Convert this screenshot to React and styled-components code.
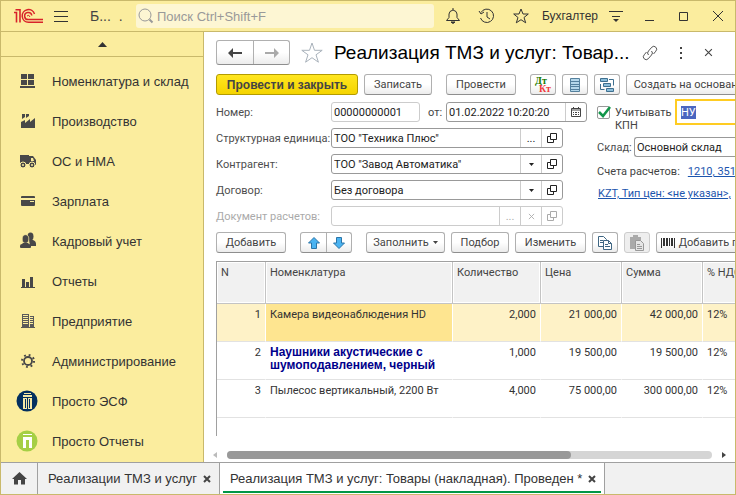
import React, { useEffect, useRef } from "react";
import styled, { createGlobalStyle, css } from "styled-components";

const menuItems = [
  { name: "Номенклатура и склад", icon: "stock" },
  { name: "Производство", icon: "factory" },
  { name: "ОС и НМА", icon: "truck" },
  { name: "Зарплата", icon: "card" },
  { name: "Кадровый учет", icon: "people" },
  { name: "Отчеты", icon: "chart" },
  { name: "Предприятие", icon: "building" },
  { name: "Администрирование", icon: "gear" },
  { name: "Просто ЭСФ", icon: "esf" },
  { name: "Просто Отчеты", icon: "reports" },
];

const rows = [
  { id: 1, name: "Камера видеонаблюдения HD", count: "2,000", price: "21 000,00", sum: "42 000,00", vat: "12%", selected: true },
  { id: 2, name: "Наушники акустические с шумоподавлением, черный", count: "1,000", price: "19 500,00", sum: "19 500,00", vat: "12%", bold: true },
  { id: 3, name: "Пылесос вертикальный, 2200 Вт", count: "4,000", price: "75 000,00", sum: "300 000,00", vat: "12%" },
];

const sectionIcons = {
  stock: (
    <g fill="#484848">
      <path d="M5 4h6v5H5zM12 4h6v5h-6zM5 10h6v5H5zM12 10h6v5h-6zM4 16h15v2H4z" />
    </g>
  ),
  factory: (
    <g fill="#484848">
      <path d="M5 18V12l4-2v3l5-4v3l5-4v10zM6 4h3v3l-3 2zM10 4h3v2l-3 2z" />
    </g>
  ),
  truck: (
    <g fill="#484848">
      <path d="M4 5h9v9H4zM13 6h4l3 4v5h-7z" />
      <path d="M15 8h2l1 3h-3z" fill="#fbed9e" />
      <circle cx="7" cy="15" r="3" stroke="#fbed9e" />
      <circle cx="16" cy="15" r="3" stroke="#fbed9e" />
      <circle cx="7" cy="15" r="1" fill="#fbed9e" />
      <circle cx="16" cy="15" r="1" fill="#fbed9e" />
    </g>
  ),
  card: (
    <g fill="#484848">
      <path d="M5 7q0-1 1-1h12q1 0 1 1v1H5zM5 10h14v5q0 1-1 1H6q-1 0-1-1z" />
      <path d="M14 11h4v1h-4z" fill="#fbed9e" />
    </g>
  ),
  people: (
    <g fill="#484848">
      <ellipse cx="14.500" cy="6.500" rx="3" ry="4" />
      <path d="M13 10h4q3 1 3 4v2h-6z" />
      <ellipse cx="9.500" cy="9" rx="3.300" ry="4.300" stroke="#fbed9e" strokeWidth=".7" />
      <path d="M7 13h5l1 1q2 0 2 2v1q0 1-1 1H5q-1 0-1-1v-1q0-2 2-2z" />
    </g>
  ),
  chart: <path d="M5 17h14v1H5zM6 9h3v8H6zM10 12h3v5h-3zM14 7h3v10h-3z" fill="#484848" />,
  building: (
    <g>
      <path d="M6 4h7v13H6zM14 6h4v11h-4zM5 17h14v1H5z" fill="#5a5a5a" />
      <path d="M7 5.500h5M7 7.500h5M7 9.500h5M7 11.500h5M7 13.500h5M14 7.500h3M14 9.500h3M14 11.500h3M14 13.500h3" stroke="#fbed9e" />
    </g>
  ),
  gear: (
    <g fill="none" stroke="#484848">
      <circle cx="12" cy="11" r="4" strokeWidth="1.800" />
      <circle cx="12" cy="11" r="6" strokeWidth="2" strokeDasharray="1.800 2.912" />
    </g>
  ),
  esf: (
    <g>
      <circle cx="11" cy="11" r="10.500" fill="#04305f" />
      <path d="M8 3h7v1H8zM7 5h9v2H7zM7 8h4v11H7zM12 8h4v11h-4z" fill="#f5e9a6" />
      <path d="M9.500 9v9M13.500 9v9" stroke="#04305f" />
    </g>
  ),
  reports: (
    <g>
      <circle cx="11" cy="11" r="10.500" fill="#a5cf45" />
      <path d="M7 4h9v1H7zM7 7h9v11h-3V10h-3v8H7z" fill="#fff" />
    </g>
  ),
};

const OpenIcon = () => (
  <svg width="10" height="10" viewBox="0 0 10 10" fill="none" stroke="currentColor">
    <path d="M3.500 .5h6v6h-6zM3.500 3.500h-3v6h6v-3" />
  </svg>
);

const ArrowIcon = () => (
  <svg width="5" height="3" viewBox="0 0 5 3">
    <path d="M0 0h5L2.500 3z" fill="currentColor" />
  </svg>
);

const CrossIcon = ({ size = 8, width = 1 }) => (
  <svg width={size} height={size} viewBox="0 0 8 8">
    <path d="M1 1l6 6M7 1L1 7" stroke="currentColor" strokeWidth={width} />
  </svg>
);

const App = () => {
  const kindRef = useRef(null);

  useEffect(() => {
    kindRef.current.focus({ preventScroll: true });
    kindRef.current.select();
  }, []);

  return (
    <Window>
      <GlobalStyle />
      <TitleBar>
        <Logo viewBox="0 0 30 16" role="img" aria-label="1С">
          <g fill="none" stroke="#d8232a">
            <path d="M0 4.500h2.500v10M1.500 1.700H6v12.800" strokeWidth="1.600" />
            <path d="M20.500 6A6.300 6.300 0 1 0 14.500 14.200H29" strokeWidth="1.500" />
            <path d="M17.800 7.500A3.600 3.600 0 1 0 14.500 11.600H29" strokeWidth="1.500" />
            <path d="M13 8q2-2 3 1" />
          </g>
        </Logo>
        <BarButton aria-label="Меню">
          <svg width="14" height="13" viewBox="0 0 14 13">
            <path d="M0 1.500h14M0 6.500h14M0 11.500h14" stroke="#333" />
          </svg>
        </BarButton>
        <BaseName>Б...{"\u00a0\u00a0"}.</BaseName>
        <SearchBox>
          <svg width="16" height="16" viewBox="0 0 16 16" fill="none" stroke="#999">
            <circle cx="7" cy="7" r="6" />
            <path d="M11.500 11.500l3 3" strokeWidth="2" />
          </svg>
          <input type="search" aria-label="Поиск" placeholder="Поиск Ctrl+Shift+F" />
        </SearchBox>
        <BarButton aria-label="Уведомления">
          <svg width="14" height="16" viewBox="0 0 14 16" fill="none" stroke="#333">
            <path d="M.5 12.500h13L11 9.500V6q0-3-4-4-4 1-4 4v3.500zM7 0v2" />
            <path d="M5 14h4l-2 1.500z" fill="#333" />
          </svg>
        </BarButton>
        <BarButton aria-label="История">
          <svg width="17" height="16" viewBox="0 0 17 16" fill="none" stroke="#333">
            <path d="M3 4.500A6.700 6.700 0 1 1 2.500 10M1 3l2 3 3-2M9 4v5l3 2" />
          </svg>
        </BarButton>
        <BarButton aria-label="Избранное">
          <svg width="16" height="16" viewBox="0 0 16 16" fill="none" stroke="#333">
            <path d="M8 1l2 5h5.300L11 9.500l1.700 5.300L8 11.700l-4.700 3.100L5 9.500.7 6H6z" />
          </svg>
        </BarButton>
        <User>Бухгалтер</User>
        <BarButton aria-label="Настройки">
          <svg width="14" height="14" viewBox="0 0 14 14">
            <path d="M0 2.500h14M3 7.500h8" stroke="#333" />
            <path d="M4 10h6l-3 3z" fill="#333" />
          </svg>
        </BarButton>
        <BarButton aria-label="Свернуть">
          <svg width="10" height="10" viewBox="0 0 10 10"><path d="M0 9.500h9" stroke="#333" /></svg>
        </BarButton>
        <BarButton aria-label="Развернуть">
          <svg width="10" height="10" viewBox="0 0 10 10"><path d="M.5 1.500h8v8h-8z" stroke="#333" fill="none" /></svg>
        </BarButton>
        <BarButton aria-label="Закрыть">
          <svg width="10" height="10" viewBox="0 0 10 10"><path d="M0 0l10 10M10 0L0 10" stroke="#333" /></svg>
        </BarButton>
      </TitleBar>

      <Body>
        <Sidebar>
          <ScrollUp aria-label="Вверх">
            <svg width="9" height="5" viewBox="0 0 9 5"><path d="M0 5l4.500-5L9 5z" fill="#333" /></svg>
          </ScrollUp>
          <nav>
            {menuItems.map((item) => (
              <MenuItem key={item.name} href="#">
                <svg width="22" height="22" viewBox="0 0 22 22">{sectionIcons[item.icon]}</svg>
                {item.name}
              </MenuItem>
            ))}
          </nav>
        </Sidebar>

        <Main>
          <Header>
            <ButtonPair>
              <PairButton $width={36} aria-label="Назад">
                <svg width="14" height="10" viewBox="0 0 14 10"><path d="M0 5l5-5v4h9v2H5v4z" fill="#444" /></svg>
              </PairButton>
              <PairButton $width={36} aria-label="Вперед">
                <svg width="14" height="10" viewBox="0 0 14 10"><path d="M14 5L9 0v4H0v2h9v4z" fill="#aaa" /></svg>
              </PairButton>
            </ButtonPair>
            <PlainButton aria-label="В избранное">
              <svg width="22" height="22" viewBox="0 0 22 22" fill="none" stroke="#a9b2bb">
                <path d="M11 1l2.500 7.300h7.700l-6.200 4.500 2.400 7.400L11 15.700l-6.400 4.500L7 12.800.8 8.300h7.700z" />
              </svg>
            </PlainButton>
            <Title>Реализация ТМЗ и услуг: Товар...</Title>
            <HeaderTools>
              <PlainButton aria-label="Ссылка">
                <svg width="16" height="16" viewBox="0 0 16 16" fill="none" stroke="#555">
                  <path d="M6.500 10q-2-2 0-4l3.300-3.800q2-2 4 0t0 4L11.500 9M9.500 6q2 2 0 4l-3.300 3.800q-2 2-4 0t0-4L4.500 7" />
                </svg>
              </PlainButton>
              <PlainButton aria-label="Еще">
                <svg width="4" height="12" viewBox="0 0 4 12"><path d="M1 0h2v2H1zM1 5h2v2H1zM1 10h2v2H1z" fill="#444" /></svg>
              </PlainButton>
              <PlainButton aria-label="Закрыть форму"><CrossIcon size={9} /></PlainButton>
            </HeaderTools>
          </Header>

          <Commands>
            <Button $primary $width={142}>Провести и закрыть</Button>
            <Button $width={68}>Записать</Button>
            <Button $width={70} $indent={8}>Провести</Button>
            <Button $width={26} $indent={8} aria-label="Дт Кт">
              <svg width="18" height="18" viewBox="0 0 18 18" fontFamily="Liberation Serif, serif" fontWeight="bold" fontSize="10">
                <text x="1" y="8" fill="#1a7a00">Дт</text>
                <text x="5" y="16" fill="#f03c3c">Кт</text>
              </svg>
            </Button>
            <Button $width={26} aria-label="Список">
              <svg width="12" height="16" viewBox="0 0 12 16">
                <path d="M1.500 1.500h9v13h-9z" fill="#b5d7ea" stroke="#54809d" />
                <path d="M1 4.500h10M1 7.500h10M1 9.500h10M1 12.500h10" stroke="#54809d" />
              </svg>
            </Button>
            <Button $width={26} aria-label="Структура">
              <svg width="16" height="16" viewBox="0 0 16 16" fill="#8bbedb" stroke="#3f7090">
                <path d="M1.500 1.500h7v3h-7zM4.500 6.500h7v3h-7zM7.500 11.500h7v3h-7z" />
                <path d="M10 2.500h4.500v6M1.500 7v5.500h4" fill="none" />
              </svg>
            </Button>
            <Button $width={132}>Создать на основании</Button>
          </Commands>

          <Form>
            <LeftColumn>
              <Label htmlFor="number">Номер:</Label>
              <FieldLine>
                <Field $width={89} $light>
                  <input id="number" defaultValue="00000000001" />
                </Field>
                <FieldText htmlFor="date">от:</FieldText>
                <Field $width={141}>
                  <input id="date" defaultValue="01.02.2022 10:20:20" />
                  <FieldButton aria-label="Календарь">
                    <svg width="10" height="10" viewBox="0 0 10 10">
                      <path d="M.5 1.500h9v8h-9zM0 3h10" fill="none" stroke="#444" />
                      <path d="M2 0h1v2H2zM7 0h1v2H7zM2 5h1v1H2zM4 5h2v1H4zM7 5h1v1H7zM2 7h1v1H2zM4 7h2v1H4zM7 7h1v1H7z" fill="#444" />
                    </svg>
                  </FieldButton>
                </Field>
              </FieldLine>

              <Label htmlFor="unit">Структурная единица:</Label>
              <Field $width={232}>
                <input id="unit" defaultValue={'ТОО "Техника Плюс"'} />
                <FieldButton aria-label="Выбрать">...</FieldButton>
                <FieldButton aria-label="Открыть"><OpenIcon /></FieldButton>
              </Field>

              <Label htmlFor="partner">Контрагент:</Label>
              <Field $width={232}>
                <select id="partner"><option>ТОО "Завод Автоматика"</option></select>
                <FieldButton aria-label="Список контрагентов"><ArrowIcon /></FieldButton>
                <FieldButton aria-label="Открыть"><OpenIcon /></FieldButton>
              </Field>

              <Label htmlFor="contract">Договор:</Label>
              <Field $width={232}>
                <select id="contract"><option>Без договора</option></select>
                <FieldButton aria-label="Список договоров"><ArrowIcon /></FieldButton>
                <FieldButton aria-label="Открыть"><OpenIcon /></FieldButton>
              </Field>

              <Label htmlFor="payment" $muted>Документ расчетов:</Label>
              <Field $width={232} $light $muted>
                <input id="payment" disabled />
                <FieldButton disabled aria-label="Выбрать">...</FieldButton>
                <FieldButton disabled aria-label="Очистить"><CrossIcon size={7} /></FieldButton>
                <FieldButton disabled aria-label="Открыть"><OpenIcon /></FieldButton>
              </Field>
            </LeftColumn>

            <RightColumn>
              <CheckLine>
                <CheckLabel>
                  <CheckBox>
                    <input type="checkbox" defaultChecked />
                    <svg width="14" height="14" viewBox="0 0 14 14">
                      <path d="M2 6l4 4 7-9" stroke="#12964a" strokeWidth="2.500" fill="none" />
                    </svg>
                  </CheckBox>
                  Учитывать КПН
                </CheckLabel>
                <KindInput ref={kindRef} aria-label="Вид учета" defaultValue="НУ" />
              </CheckLine>
              <StoreLine>
                <Label htmlFor="store">Склад:</Label>
                <Field $fill><input id="store" defaultValue="Основной склад" /></Field>
              </StoreLine>
              <AccountLine>
                Счета расчетов: <a href="#">1210, 3510</a>
              </AccountLine>
              <PriceLine>
                <a href="#">KZT, Тип цен: &lt;не указан&gt;,</a>
              </PriceLine>
            </RightColumn>
          </Form>

          <TableCommands>
            <Button $width={70}>Добавить</Button>
            <ButtonPair $indent={8}>
              <PairButton $width={25} aria-label="Вверх">
                <svg width="12" height="12" viewBox="0 0 12 12"><path d="M6 .5L11.500 6H8.500v5.500h-5V6H.5z" fill="#4ab3f1" stroke="#2a75a8" /></svg>
              </PairButton>
              <PairButton $width={25} aria-label="Вниз">
                <svg width="12" height="12" viewBox="0 0 12 12"><path d="M6 11.500L.5 6h3V.5h5V6h3z" fill="#4ab3f1" stroke="#2a75a8" /></svg>
              </PairButton>
            </ButtonPair>
            <Button $width={79} $indent={8}>Заполнить<ArrowIcon /></Button>
            <Button $width={58}>Подбор</Button>
            <Button $width={71}>Изменить</Button>
            <Button $width={26} aria-label="Скопировать">
              <svg width="16" height="16" viewBox="0 0 16 16" fill="#fff" stroke="#3f6683">
                <path d="M1.500 1.500h5l3 3v7h-8z" />
                <path d="M6.500 5.500h5l3 3v6h-8zM11.500 5.500v3h3M8 9.500h3M8 11.500h5" />
                <path d="M3 5.500h3M3 7.500h3" />
              </svg>
            </Button>
            <Button $width={26} disabled aria-label="Вставить">
              <svg width="16" height="16" viewBox="0 0 16 16">
                <path d="M1 2h11v12H1zM4 0h5v3H4z" fill="#aaa" />
                <path d="M6.500 5.500h5l3 3v7h-8zM8 9.500h3M8 11.500h5M8 13.500h5" fill="#e6e6e6" stroke="#999" />
              </svg>
            </Button>
            <Button $width={152}>
              <svg width="14" height="10" viewBox="0 0 14 10">
                <path d="M0 0h1v10H0zM2 0h2v8H2zM5 0h2v8H5zM8 0h1v8H8zM10 0h2v8h-2zM13 0h1v10h-1z" fill="#333" />
              </svg>
              Добавить по штрихкоду
            </Button>
          </TableCommands>

          <TableFrame>
            <Table>
              <colgroup>
                <Col $width={49} />
                <Col $width={187} />
                <Col $width={88} />
                <Col $width={81} />
                <Col $width={81} />
                <Col $width={81} />
              </colgroup>
              <thead>
                <tr>
                  <th>N</th>
                  <th>Номенклатура</th>
                  <th>Количество</th>
                  <th>Цена</th>
                  <th>Сумма</th>
                  <th>% НДС</th>
                </tr>
              </thead>
              <tbody>
                {rows.map((row) => (
                  <Row key={row.id} $selected={row.selected}>
                    <Cell $right>{row.id}</Cell>
                    <Cell $current={row.selected} $bold={row.bold}>{row.name}</Cell>
                    <Cell $right>{row.count}</Cell>
                    <Cell $right>{row.price}</Cell>
                    <Cell $right>{row.sum}</Cell>
                    <Cell>{row.vat}</Cell>
                  </Row>
                ))}
              </tbody>
            </Table>
          </TableFrame>

          <ScrollBar>
            <svg width="4" height="6" viewBox="0 0 4 6"><path d="M4 0v6L0 3z" fill="#bbb" /></svg>
            <Track><Thumb /></Track>
            <svg width="4" height="6" viewBox="0 0 4 6"><path d="M0 0v6l4-3z" fill="#444" /></svg>
          </ScrollBar>
        </Main>
      </Body>

      <Tabs>
        <HomeTab aria-label="Начальная страница">
          <svg width="15" height="13" viewBox="0 0 15 13"><path d="M7.500 0L15 7h-2v5.500H9V8H6v4.500H2V7H0z" fill="#444" /></svg>
        </HomeTab>
        <Tab>
          <span>Реализации ТМЗ и услуг</span>
          <PlainButton aria-label="Закрыть вкладку"><CrossIcon width={2} /></PlainButton>
        </Tab>
        <Tab $active>
          <span>Реализация ТМЗ и услуг: Товары (накладная). Проведен *</span>
          <PlainButton aria-label="Закрыть вкладку"><CrossIcon width={2} /></PlainButton>
        </Tab>
      </Tabs>
    </Window>
  );
};

export default App;

const GlobalStyle = createGlobalStyle`
  * {
    box-sizing: border-box;
  }
  body {
    margin: 0;
    font-family: "Roboto", sans-serif;
    font-size: 11px;
    color: #444;
  }
  button, input, select {
    font: inherit;
    color: inherit;
    margin: 0;
  }
  svg {
    display: block;
    flex: none;
  }
  a {
    color: #1c55ae;
  }
`;

const Window = styled.div`
  display: flex;
  flex-direction: column;
  height: 100vh;
  border: 1px solid #c9b96b;
  background: #fff;
  overflow: hidden;
`;

const TitleBar = styled.header`
  display: flex;
  align-items: center;
  flex: none;
  height: 31px;
  padding-left: 13px;
  background: #fbed9e;
  border-bottom: 1px solid #c9b96b;
  font-family: "Liberation Sans", sans-serif;
`;

const Logo = styled.svg`
  width: 30px;
  height: 16px;
`;

const BarButton = styled.button`
  display: flex;
  align-items: center;
  justify-content: center;
  flex: none;
  width: 34px;
  height: 30px;
  padding: 0;
  border: none;
  background: none;
`;

const BaseName = styled.span`
  width: 46px;
  margin-left: 12px;
  font-size: 14px;
  white-space: nowrap;
`;

const SearchBox = styled.div`
  display: flex;
  align-items: center;
  flex: 1;
  height: 24px;
  margin-right: 2px;
  padding-left: 2px;
  border-radius: 3px;
  background: #fdf6d3;

  input {
    flex: 1;
    min-width: 0;
    padding: 0 3px;
    border: none;
    outline: none;
    background: none;
    font-size: 13px;
  }
  input::placeholder {
    color: #999;
  }
`;

const User = styled.span`
  margin: 0 1px 0 4px;
  font-size: 12px;
  color: #333;
`;

const Body = styled.div`
  display: flex;
  flex: 1;
  min-height: 0;
`;

const Sidebar = styled.aside`
  flex: none;
  width: 203px;
  background: #fbed9e;
  border-right: 1px solid #c9b96b;
`;

const ScrollUp = styled.button`
  display: flex;
  justify-content: center;
  align-items: center;
  width: 100%;
  height: 25px;
  margin-bottom: 4px;
  padding: 0;
  border: none;
  border-bottom: 1px solid #c9b96b;
  background: none;
`;

const MenuItem = styled.a`
  display: flex;
  align-items: center;
  gap: 14px;
  height: 40px;
  padding-left: 15px;
  font-family: "Liberation Sans", sans-serif;
  font-size: 13px;
  color: #333;
  text-decoration: none;
  white-space: nowrap;
`;

const Main = styled.main`
  display: flex;
  flex-direction: column;
  flex: 1;
  min-width: 0;
  padding-left: 12px;
  overflow: clip;
`;

const Header = styled.div`
  display: flex;
  align-items: center;
  height: 25px;
  margin-top: 8px;
  padding-right: 22px;
`;

const buttonLook = css`
  border: 1px solid #b0b0b0;
  border-bottom-color: #8e8e8e;
  border-radius: 3px;
  background: linear-gradient(#fff 50%, #ececec);
`;

const ButtonPair = styled.div`
  display: flex;
  flex: none;
  margin-left: ${(props) => props.$indent || 0}px;
  ${buttonLook}
`;

const PairButton = styled.button`
  display: flex;
  align-items: center;
  justify-content: center;
  width: ${(props) => props.$width}px;
  min-height: 19px;
  padding: 0;
  border: none;
  background: none;

  & + & {
    border-left: 1px solid #b0b0b0;
  }
  ${Header} & {
    height: 23px;
  }
`;

const PlainButton = styled.button`
  display: flex;
  align-items: center;
  justify-content: center;
  flex: none;
  padding: 0;
  border: none;
  background: none;
  color: #444;

  ${Header} > & {
    margin: 0 11px;
  }
`;

const Title = styled.h1`
  flex: 1;
  margin: 0;
  font-family: "Liberation Sans", sans-serif;
  font-size: 19px;
  font-weight: normal;
  color: #000;
  white-space: nowrap;
`;

const HeaderTools = styled.div`
  display: flex;
  align-items: center;
  gap: 21px;
`;

const Commands = styled.div`
  display: flex;
  gap: 6px;
  margin-top: 9px;
`;

const Button = styled.button`
  display: flex;
  align-items: center;
  justify-content: center;
  gap: 4px;
  flex: none;
  width: ${(props) => props.$width}px;
  height: 21px;
  margin-left: ${(props) => props.$indent || 0}px;
  padding: 0;
  white-space: nowrap;
  ${buttonLook}
  ${(props) =>
    props.$primary &&
    css`
      border-color: #b39b00;
      background: linear-gradient(#ffe620, #f5d400);
      font-family: "Liberation Sans", sans-serif;
      font-size: 12px;
      font-weight: bold;
    `}

  &:disabled {
    border-color: #ccc;
    background: #eee;
  }
`;

const Form = styled.div`
  display: flex;
  gap: 10px;
  margin-top: 7px;
`;

const LeftColumn = styled.div`
  display: grid;
  grid-template-columns: 115px 256px;
  align-items: center;
  align-content: start;
  row-gap: 6px;
  flex: none;
`;

const Label = styled.label`
  color: ${(props) => (props.$muted ? "#aaa" : "#4d4d4d")};
  white-space: nowrap;
`;

const FieldLine = styled.div`
  display: flex;
  align-items: center;
`;

const FieldText = styled.label`
  width: 26px;
  padding-left: 8px;
`;

const Field = styled.div`
  display: flex;
  flex: ${(props) => (props.$fill ? "1" : "none")};
  width: ${(props) => (props.$fill ? "auto" : `${props.$width}px`)};
  min-width: 0;
  height: 20px;
  border: 1px solid ${(props) => (props.$light ? "#ccc" : "#999")};
  border-right-width: ${(props) => (props.$fill ? "0" : "1px")};
  border-radius: ${(props) => (props.$fill ? "3px 0 0 3px" : "3px")};
  background: #fff;
  color: ${(props) => (props.$muted ? "#aaa" : "#222")};

  input, select {
    flex: 1;
    min-width: 0;
    padding: 0 2px;
    border: none;
    outline: none;
    background: none;
    appearance: none;
  }
`;

const FieldButton = styled.button`
  display: flex;
  align-items: center;
  justify-content: center;
  flex: none;
  width: 21px;
  padding: 0;
  border: none;
  border-left: 1px solid #ccc;
  background: none;
  color: inherit;
`;

const RightColumn = styled.div`
  flex: 1;
  min-width: 0;
`;

const CheckLine = styled.div`
  display: flex;
  height: 31px;
`;

const CheckLabel = styled.label`
  display: flex;
  flex: none;
  gap: 4px;
  width: 78px;
  padding-top: 4px;
  line-height: 13px;
`;

const CheckBox = styled.span`
  position: relative;
  flex: none;
  width: 14px;
  height: 13px;

  input {
    display: block;
    width: 13px;
    height: 13px;
    appearance: none;
    border: 1px solid #999;
    border-radius: 2px;
  }
  svg {
    position: absolute;
    top: 0;
    left: 0;
    visibility: hidden;
  }
  input:checked + svg {
    visibility: visible;
  }
`;

const KindInput = styled.input`
  flex: 1;
  min-width: 0;
  height: 26px;
  margin-top: -3px;
  padding: 0 4px;
  border: 2px solid #fc2;
  border-right: none;
  outline: none;

  &::selection {
    background: #4a66c0;
    color: #fff;
  }
`;

const StoreLine = styled.div`
  display: flex;
  align-items: center;
  margin-top: 4px;

  label {
    width: 37px;
  }
`;

const AccountLine = styled.div`
  display: flex;
  gap: 8px;
  margin-top: 7px;
  line-height: 15px;
  white-space: nowrap;
`;

const PriceLine = styled.div`
  margin-top: 7px;
  padding-left: 1px;
  line-height: 15px;
  white-space: nowrap;
`;

const TableCommands = styled.div`
  display: flex;
  gap: 6px;
  margin-top: 6px;
`;

const TableFrame = styled.div`
  flex: 1;
  min-height: 0;
  margin: 8px 0 15px;
  border: 1px solid #a0a0a0;
  border-width: 1px 0 0 1px;
  overflow: hidden;
`;

const Table = styled.table`
  width: 567px;
  table-layout: fixed;
  border-collapse: separate;
  border-spacing: 0;
  line-height: 13px;

  th {
    height: 42px;
    padding: 4px;
    border-right: 1px solid #c4c4c4;
    border-bottom: 1px solid #c4c4c4;
    background: #f1f1f1;
    box-shadow: inset 0 0 0 1px #fff;
    font-weight: normal;
    text-align: left;
    vertical-align: top;
  }
`;

const Col = styled.col`
  width: ${(props) => props.$width}px;
`;

const Row = styled.tr`
  background: ${(props) => (props.$selected ? "#fef2c7" : "#fff")};
`;

const Cell = styled.td`
  height: 38px;
  padding: 4px;
  border-right: 1px solid #fff;
  border-bottom: 1px solid #e2e2e2;
  background: ${(props) => (props.$current ? "#fee590" : "transparent")};
  color: ${(props) => (props.$bold ? "#00008b" : "#333")};
  font-family: ${(props) => (props.$bold ? '"Liberation Sans"' : '"Roboto"')}, sans-serif;
  font-size: ${(props) => (props.$bold ? "12px" : "11px")};
  font-weight: ${(props) => (props.$bold ? "bold" : "normal")};
  text-align: ${(props) => (props.$right ? "right" : "left")};
  vertical-align: top;
`;

const ScrollBar = styled.div`
  display: flex;
  align-items: center;
  gap: 10px;
  height: 8px;
  margin: 0 9px 3px -3px;
`;

const Track = styled.div`
  flex: 1;
  height: 8px;
  border-radius: 4px;
  background: #d5d5d5;
`;

const Thumb = styled.div`
  width: 71%;
  height: 8px;
  border-radius: 4px;
  background: #999;
`;

const Tabs = styled.div`
  display: flex;
  flex: none;
  height: 32px;
  border-top: 1px solid #a0a0a0;
  background: #f1f1f1;
`;

const HomeTab = styled.button`
  display: flex;
  align-items: center;
  justify-content: center;
  width: 37px;
  padding: 0;
  border: none;
  border-right: 1px solid #a0a0a0;
  background: none;
`;

const Tab = styled.div`
  position: relative;
  display: flex;
  align-items: center;
  gap: 6px;
  padding: 0 8px 0 10px;
  border-right: 1px solid #a0a0a0;
  background: ${(props) => (props.$active ? "#fff" : "none")};
  font-family: "Liberation Sans", sans-serif;
  font-size: 13px;
  color: #333;
  white-space: nowrap;
  ${(props) =>
    props.$active &&
    css`
      &::after {
        content: "";
        position: absolute;
        left: 3px;
        right: 3px;
        bottom: 1px;
        height: 2px;
        background: #009646;
      }
    `}
`;
